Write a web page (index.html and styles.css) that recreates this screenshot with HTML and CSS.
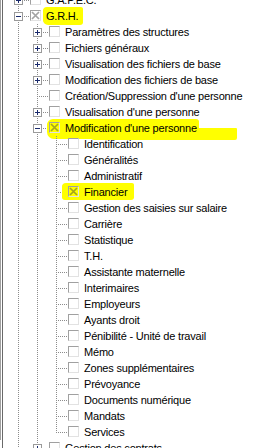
FILE: index.html
```html
<!DOCTYPE html>
<html lang="fr">
<head>
    <meta charset="UTF-8">
    <meta name="viewport" content="width=device-width, initial-scale=1.0">
    <title>Droits - G.R.H.</title>
    <link rel="stylesheet" href="styles.css">
</head>
<body>
    <div class="frame">
        <div class="tree">
            <!-- niveau 0 -->
            <div class="row"><span class="cell tee"><i class="exp plus"></i></span><span class="box"></span><span class="label">G.A.P.E.C.</span></div>
            <div class="row"><span class="cell tee"><i class="exp minus"></i></span><span class="box checked"><svg width="9" height="9" viewBox="0 0 9 9"><path d="M1 1L8 8M8 1L1 8" /></svg></span><span class="label mark mark-grh">G.R.H.</span></div>

            <!-- niveau 1 -->
            <div class="row"><span class="ind pipe"></span><span class="cell tee"><i class="exp plus"></i></span><span class="box"></span><span class="label">Paramètres des structures</span></div>
            <div class="row"><span class="ind pipe"></span><span class="cell tee"><i class="exp plus"></i></span><span class="box"></span><span class="label">Fichiers généraux</span></div>
            <div class="row"><span class="ind pipe"></span><span class="cell tee"><i class="exp plus"></i></span><span class="box"></span><span class="label">Visualisation des fichiers de base</span></div>
            <div class="row"><span class="ind pipe"></span><span class="cell tee"><i class="exp plus"></i></span><span class="box"></span><span class="label">Modification des fichiers de base</span></div>
            <div class="row"><span class="ind pipe"></span><span class="cell tee"></span><span class="box"></span><span class="label">Création/Suppression d'une personne</span></div>
            <div class="row"><span class="ind pipe"></span><span class="cell tee"><i class="exp plus"></i></span><span class="box"></span><span class="label">Visualisation d'une personne</span></div>
            <div class="row"><span class="ind pipe"></span><span class="cell tee"><i class="exp minus"></i></span>
                <span class="mark mark-modif"><span class="box checked"><svg width="9" height="9" viewBox="0 0 9 9"><path d="M1 1L8 8M8 1L1 8" /></svg></span><span class="label">Modification d'une personne</span></span>
            </div>

            <!-- niveau 2 -->
            <div class="row"><span class="ind pipe"></span><span class="ind pipe"></span><span class="cell tee"></span><span class="box"></span><span class="label">Identification</span></div>
            <div class="row"><span class="ind pipe"></span><span class="ind pipe"></span><span class="cell tee"></span><span class="box"></span><span class="label">Généralités</span></div>
            <div class="row"><span class="ind pipe"></span><span class="ind pipe"></span><span class="cell tee"></span><span class="box"></span><span class="label">Administratif</span></div>
            <div class="row"><span class="ind pipe"></span><span class="ind pipe"></span><span class="cell tee"></span>
                <span class="mark mark-fin"><span class="box checked"><svg width="9" height="9" viewBox="0 0 9 9"><path d="M1 1L8 8M8 1L1 8" /></svg></span><span class="label">Financier</span></span>
            </div>
            <div class="row"><span class="ind pipe"></span><span class="ind pipe"></span><span class="cell tee"></span><span class="box"></span><span class="label">Gestion des saisies sur salaire</span></div>
            <div class="row"><span class="ind pipe"></span><span class="ind pipe"></span><span class="cell tee"></span><span class="box"></span><span class="label">Carrière</span></div>
            <div class="row"><span class="ind pipe"></span><span class="ind pipe"></span><span class="cell tee"></span><span class="box"></span><span class="label">Statistique</span></div>
            <div class="row"><span class="ind pipe"></span><span class="ind pipe"></span><span class="cell tee"></span><span class="box"></span><span class="label">T.H.</span></div>
            <div class="row"><span class="ind pipe"></span><span class="ind pipe"></span><span class="cell tee"></span><span class="box"></span><span class="label">Assistante maternelle</span></div>
            <div class="row"><span class="ind pipe"></span><span class="ind pipe"></span><span class="cell tee"></span><span class="box"></span><span class="label">Interimaires</span></div>
            <div class="row"><span class="ind pipe"></span><span class="ind pipe"></span><span class="cell tee"></span><span class="box"></span><span class="label">Employeurs</span></div>
            <div class="row"><span class="ind pipe"></span><span class="ind pipe"></span><span class="cell tee"></span><span class="box"></span><span class="label">Ayants droit</span></div>
            <div class="row"><span class="ind pipe"></span><span class="ind pipe"></span><span class="cell tee"></span><span class="box"></span><span class="label">Pénibilité - Unité de travail</span></div>
            <div class="row"><span class="ind pipe"></span><span class="ind pipe"></span><span class="cell tee"></span><span class="box"></span><span class="label">Mémo</span></div>
            <div class="row"><span class="ind pipe"></span><span class="ind pipe"></span><span class="cell tee"></span><span class="box"></span><span class="label">Zones supplémentaires</span></div>
            <div class="row"><span class="ind pipe"></span><span class="ind pipe"></span><span class="cell tee"></span><span class="box"></span><span class="label">Prévoyance</span></div>
            <div class="row"><span class="ind pipe"></span><span class="ind pipe"></span><span class="cell tee"></span><span class="box"></span><span class="label">Documents numérique</span></div>
            <div class="row"><span class="ind pipe"></span><span class="ind pipe"></span><span class="cell tee"></span><span class="box"></span><span class="label">Mandats</span></div>
            <div class="row"><span class="ind pipe"></span><span class="ind pipe"></span><span class="cell ell"></span><span class="box"></span><span class="label">Services</span></div>

            <div class="row"><span class="ind pipe"></span><span class="cell tee"><i class="exp plus"></i></span><span class="box"></span><span class="label">Gestion des contrats</span></div>
        </div>
    </div>
</body>
</html>
```

FILE: styles.css
```css
html, body {
    margin: 0;
    padding: 0;
    height: 448px;
    overflow: hidden;
    background: #fff;
}

body {
    font-family: "Liberation Sans", Arial, sans-serif;
    font-size: 11px;
    color: #000;
}

.frame {
    border-left: 1px solid #a0a0a0;
    padding-left: 1px;
    height: 448px;
}

.tree {
    border-left: 1px solid #696969;
    padding-left: 6px;
    margin-top: -8px;
    height: 470px;
}

.row {
    display: flex;
    align-items: flex-start;
    height: 16px;
    white-space: nowrap;
}

/* colonnes des lignes pointillees */
.ind,
.cell {
    display: block;
    height: 16px;
    flex: none;
    background-repeat: no-repeat;
}

.ind {
    width: 19px;
}

.cell {
    width: 21px;
}

.pipe {
    background-image: repeating-linear-gradient(to bottom, #8c8c8c 0 1px, transparent 1px 2px);
    background-size: 1px 100%;
    background-position: 9px 0;
}

.tee,
.ell {
    background-image:
        repeating-linear-gradient(to bottom, #8c8c8c 0 1px, transparent 1px 2px),
        repeating-linear-gradient(to right, #8c8c8c 0 1px, transparent 1px 2px);
    background-size: 1px 100%, 12px 1px;
    background-position: 9px 0, 9px 8px;
}

.ell {
    background-size: 1px 9px, 12px 1px;
}

/* boutons +/- */
.exp {
    display: block;
    box-sizing: border-box;
    width: 9px;
    height: 9px;
    margin: 4px 0 0 5px;
    border: 1px solid #9a9a9a;
    background-color: #fff;
    background-repeat: no-repeat;
    background-position: center;
}

.plus {
    background-image:
        linear-gradient(#1a2a6c, #1a2a6c),
        linear-gradient(#1a2a6c, #1a2a6c);
    background-size: 5px 1px, 1px 5px;
}

.minus {
    background-image: linear-gradient(#1a2a6c, #1a2a6c);
    background-size: 5px 1px;
}

/* cases a cocher */
.box {
    display: block;
    flex: none;
    box-sizing: border-box;
    width: 11px;
    height: 11px;
    margin-top: 2px;
    border: 1px solid;
    border-color: #a0a0a0 #e2e2e2 #e2e2e2 #a0a0a0;
    background: #fff;
}

.box svg {
    display: block;
}

.box path {
    stroke: #a3a3a3;
    stroke-width: 1.7;
    fill: none;
}

.label {
    display: block;
    margin-left: 5px;
    line-height: 16px;
    letter-spacing: -0.2px;
}

/* surlignage au marqueur */
.mark {
    display: flex;
    align-items: flex-start;
    background: #ffff00;
}

.mark .box {
    background: transparent;
}

.mark .box path {
    stroke: #a4a420;
}

.mark-grh {
    margin-left: 2px;
    padding: 0 5px 0 3px;
    border-radius: 4px 2px 3px 5px;
    box-shadow: 0 -1px 0 #ffff00, 0 1px 0 #ffff00;
}

.mark-modif {
    margin-left: -2px;
    padding: 0 2px 0 2px;
    border-radius: 6px 3px 4px 7px;
    box-shadow: 0 -1px 0 #ffff00, 0 3px 0 #ffff00, 40px 6px 0 -2px #ffff00;
}

.mark-fin {
    margin-left: -6px;
    padding: 0 7px 0 6px;
    border-radius: 4px 2px 3px 3px;
    box-shadow: 0 -1px 0 #ffff00;
}

.mark .label {
    margin-left: 5px;
}
```
